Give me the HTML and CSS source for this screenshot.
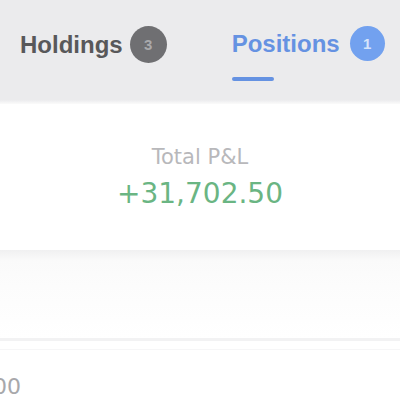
FILE: index.html
```html
<!DOCTYPE html>
<html lang="en">
<head>
  <meta charset="UTF-8" />
  <meta name="viewport" content="width=device-width, initial-scale=1.0" />
  <title>Portfolio</title>
  <link rel="stylesheet" href="styles.css">
</head>
<body>
  <div class="tabs">
    <div class="tab">
      <div class="tab-label">Holdings <span class="count">3</span></div>
    </div>
    <div class="tab active">
      <div class="tab-label">Positions <span class="count">1</span></div>
      <div class="underline"></div>
    </div>
  </div>

  <div class="summary">
    <div class="summary-title">Total P&amp;L</div>
    <div class="summary-value">+31,702.50</div>
  </div>

  <div class="band"></div>
  <div class="list-head"></div>

  <div class="row">
    <span class="row-value">0.00</span>
  </div>
</body>
</html>
```

FILE: styles.css
```css
body {
  margin: 0;
  background: #fff;
  font-family: "DejaVu Sans", sans-serif;
  overflow: hidden;
}

.tabs {
  height: 104px;
  box-sizing: border-box;
  padding: 26px 0 0 20px;
  background: linear-gradient(#ebebed 96%, #fbfbfb);
  display: flex;
  gap: 65px;
}

.tab-label {
  display: flex;
  align-items: center;
  gap: 7px;
  font-family: "Liberation Sans", sans-serif;
  font-weight: 700;
  font-size: 24px;
  line-height: 28px;
  color: #58585a;
}

.count {
  width: 37px;
  height: 37px;
  border-radius: 50%;
  background: #6f6f72;
  color: #a9a9ac;
  font-size: 15px;
  display: flex;
  align-items: center;
  justify-content: center;
}

.tab.active .tab-label {
  color: #6592e2;
  gap: 10px;
}

.tab.active .count {
  width: 35px;
  height: 35px;
  background: #72a1ef;
  color: #d6e4fb;
}

.underline {
  width: 42px;
  height: 4px;
  margin-top: 16px;
  border-radius: 2px;
  background: #6592e2;
}

.summary {
  height: 146px;
  box-sizing: border-box;
  padding-top: 41px;
  text-align: center;
}

.summary-title {
  font-size: 21px;
  line-height: 24px;
  color: #b8b8bb;
}

.summary-value {
  margin-top: 9px;
  font-size: 28px;
  line-height: 32px;
  color: #6ab583;
}

.band {
  height: 88px;
  background: linear-gradient(#f0f0f1, #fafafa 12%, #fcfcfc 40%, #fff);
}

.list-head {
  height: 8px;
  border-top: 3px solid #f2f2f3;
  border-bottom: 1px solid #f6f6f7;
}

.row {
  padding-top: 24px;
  font-size: 22px;
  line-height: 26px;
  color: #a8a8ab;
}

.row-value {
  display: inline-block;
  margin-left: -28px;
}
```
